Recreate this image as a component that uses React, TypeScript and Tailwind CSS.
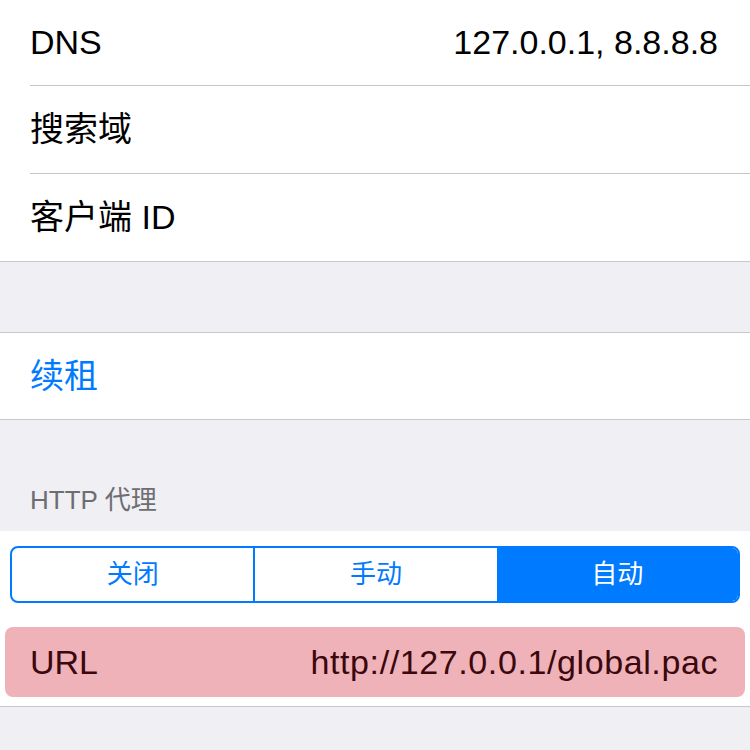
const font = { fontFamily: '"Liberation Sans", "Noto Sans CJK SC", sans-serif' };

const Row = ({ label, value, h, last, blue }: { label: string; value?: string; h: string; last?: boolean; blue?: boolean }) => (
  <div className={`pl-[30px] bg-white ${last ? 'border-b border-[#c8c7cc]' : ''}`}>
    <div className={`${h} flex items-center justify-between pr-[32px] ${last ? '' : 'border-b border-[#c8c7cc]'}`}>
      <span className={`text-[34px] ${blue ? 'text-[#007aff]' : 'text-black'}`}>{label}</span>
      {value && <span className="text-[34px] text-black">{value}</span>}
    </div>
  </div>
);

export default function App() {
  return (
    <div className="w-[750px] h-[750px] overflow-hidden bg-[#efeff4]" style={font}>
      <Row label="DNS" value="127.0.0.1, 8.8.8.8" h="h-[86px]" />
      <Row label="搜索域" h="h-[88px]" />
      <Row label="客户端 ID" h="h-[87px]" last />
      <div className="h-[70px]" />
      <div className="border-t border-[#c8c7cc]">
        <Row label="续租" h="h-[86px]" last blue />
      </div>
      <div className="h-[111px] flex items-end pl-[30px] pb-[18px]">
        <span className="text-[26px] text-[#6d6d72] leading-none">HTTP 代理</span>
      </div>
      <div className="bg-white border-b border-[#c8c7cc] pt-[15px] pb-[9px]">
        <div className="mx-[10px] h-[57px] flex border-2 border-[#007aff] rounded-[8px] overflow-hidden">
          <div className="flex-1 flex items-center justify-center text-[26px] text-[#007aff] border-r-2 border-[#007aff]">关闭</div>
          <div className="flex-1 flex items-center justify-center text-[26px] text-[#007aff]">手动</div>
          <div className="flex-1 flex items-center justify-center text-[26px] text-white bg-[#007aff]">自动</div>
        </div>
        <div className="mt-[24px] mx-[5px] h-[70px] rounded-[8px] bg-[#efb2b9] flex items-center justify-between pl-[25px] pr-[27px]">
          <span className="text-[34px] text-[#3a080d]">URL</span>
          <span className="text-[34px] text-[#3a080d] tracking-[0.6px]">http://127.0.0.1/global.pac</span>
        </div>
      </div>
    </div>
  );
}
